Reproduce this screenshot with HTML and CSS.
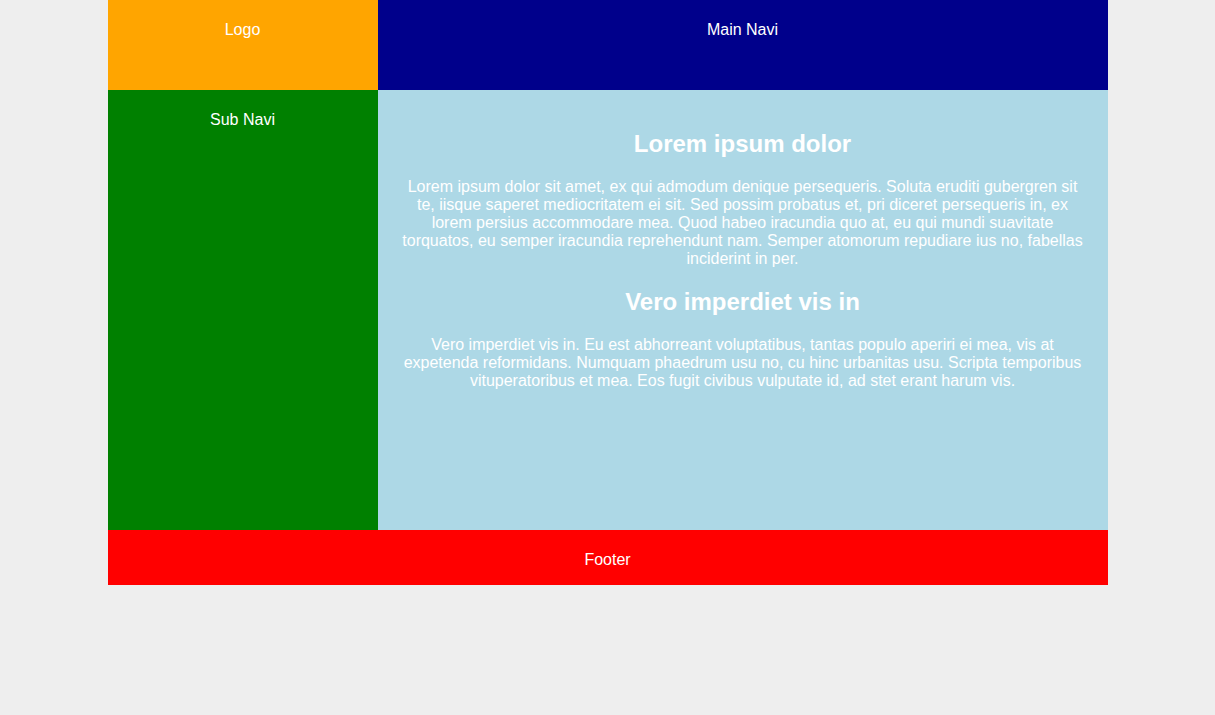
FILE: index.html
```html
<!DOCTYPE html>
<html>
<head>
<meta charset="utf-8">
<link rel="stylesheet" href="styles.css">
</head>
<body>
<div class="page">
  <div class="logo">Logo</div>
  <div class="mainnav">Main Navi</div>
  <div class="subnav">Sub Navi</div>
  <div class="content">
    <h2>Lorem ipsum dolor</h2>
    <p>Lorem ipsum dolor sit amet, ex qui admodum denique persequeris. Soluta eruditi gubergren sit te, iisque saperet mediocritatem ei sit. Sed possim probatus et, pri diceret persequeris in, ex lorem persius accommodare mea. Quod habeo iracundia quo at, eu qui mundi suavitate torquatos, eu semper iracundia reprehendunt nam. Semper atomorum repudiare ius no, fabellas inciderint in per.</p>
    <h2>Vero imperdiet vis in</h2>
    <p>Vero imperdiet vis in. Eu est abhorreant voluptatibus, tantas populo aperiri ei mea, vis at expetenda reformidans. Numquam phaedrum usu no, cu hinc urbanitas usu. Scripta temporibus vituperatoribus et mea. Eos fugit civibus vulputate id, ad stet erant harum vis.</p>
  </div>
  <div class="footer">Footer</div>
</div>
</body>
</html>
```
FILE: styles.css
```css
html, body {
  margin: 0;
  padding: 0;
  background: #eeeeee;
}
body {
  font-family: "Liberation Sans", Arial, sans-serif;
  font-size: 16px;
  line-height: normal;
  color: #ffffff;
}
.page {
  width: 1000px;
  margin: 0 auto;
  display: grid;
  grid-template-columns: 270px 730px;
  grid-template-rows: 90px 440px 55px;
  text-align: center;
}
.logo, .mainnav, .subnav, .footer {
  padding: 21px 20px 20px;
  box-sizing: border-box;
}
.logo { background: #ffa500; }
.mainnav { background: #00008b; }
.subnav { background: #008000; }
.content {
  background: #add8e6;
  padding: 20px;
  box-sizing: border-box;
}
.content h2 {
  font-size: 24px;
  font-weight: bold;
  margin: 20px 0;
}
.content p {
  margin: 16px 0;
}
.footer {
  grid-column: 1 / 3;
  background: #ff0000;
}
```
